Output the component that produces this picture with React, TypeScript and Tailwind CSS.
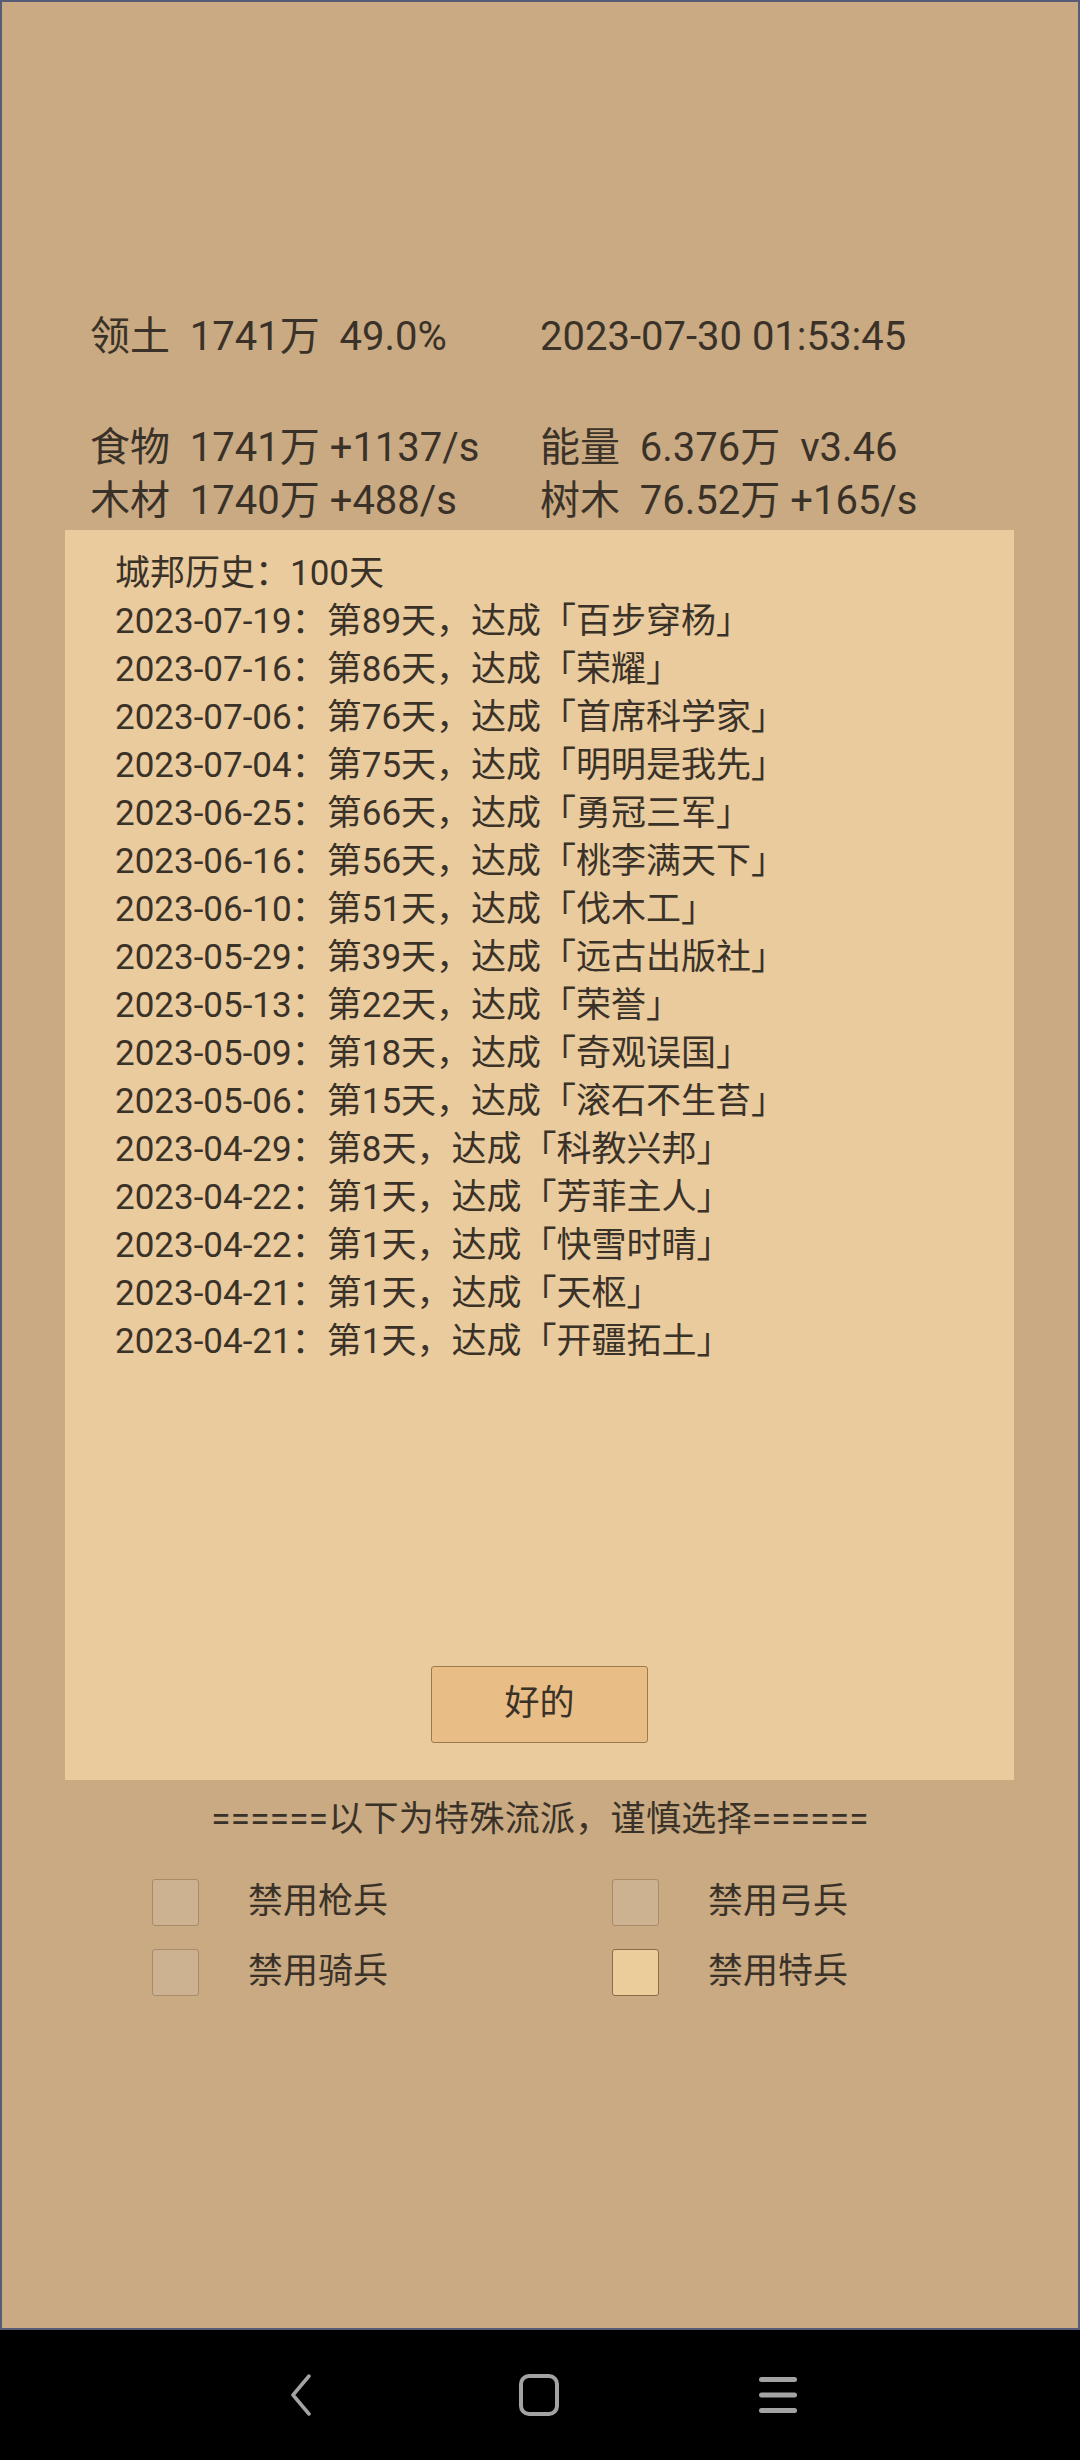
import React from "react";

const FONT = { fontFamily: 'Roboto, "Noto Sans CJK SC", sans-serif' };

const history: [string, string, string][] = [
  ["2023-07-19", "第89天", "百步穿杨"],
  ["2023-07-16", "第86天", "荣耀"],
  ["2023-07-06", "第76天", "首席科学家"],
  ["2023-07-04", "第75天", "明明是我先"],
  ["2023-06-25", "第66天", "勇冠三军"],
  ["2023-06-16", "第56天", "桃李满天下"],
  ["2023-06-10", "第51天", "伐木工"],
  ["2023-05-29", "第39天", "远古出版社"],
  ["2023-05-13", "第22天", "荣誉"],
  ["2023-05-09", "第18天", "奇观误国"],
  ["2023-05-06", "第15天", "滚石不生苔"],
  ["2023-04-29", "第8天", "科教兴邦"],
  ["2023-04-22", "第1天", "芳菲主人"],
  ["2023-04-22", "第1天", "快雪时晴"],
  ["2023-04-21", "第1天", "天枢"],
  ["2023-04-21", "第1天", "开疆拓土"],
];

function Box({ checked }: { checked?: boolean }) {
  return (
    <div
      className={
        checked
          ? "w-[47px] h-[47px] rounded-[3px] border border-[#8d6b45] bg-[#ebcc9b] shrink-0"
          : "w-[47px] h-[47px] rounded-[3px] border border-[#a88b68] bg-[#cdb292] shrink-0"
      }
    />
  );
}

function Check({ label, checked }: { label: string; checked?: boolean }) {
  return (
    <div className="flex items-center h-[70px]">
      <Box checked={checked} />
      <span className="ml-[49px] text-[35px] leading-[48px] text-[#3a3228]">{label}</span>
    </div>
  );
}

export default function App() {
  return (
    <div className="w-[1080px] h-[2460px] flex flex-col" style={FONT}>
      <div className="h-[2330px] border-2 border-[#575b78] bg-[#c9aa82] flex flex-col text-[#3a3228]">
        <div className="pt-[308px] pl-[88px] grid grid-cols-[450px_1fr] text-[40px] leading-[53px] whitespace-pre">
          <div>领土  1741万  49.0%</div>
          <div>2023-07-30 01:53:45</div>
        </div>
        <div className="mt-[58px] pl-[88px] grid grid-cols-[450px_1fr] text-[40px] leading-[53px] whitespace-pre">
          <div>食物  1741万 +1137/s</div>
          <div>能量  6.376万  v3.46</div>
          <div>木材  1740万 +488/s</div>
          <div>树木  76.52万 +165/s</div>
        </div>
        <div className="mt-[3px] ml-[63px] w-[949px] h-[1250px] bg-[#e9cb9e] flex flex-col pl-[50px] pt-[20px] pb-[37px]">
          <div className="text-[35px] leading-[48px]">城邦历史：100天</div>
          {history.map(([d, day, name], i) => (
            <div key={i} className="text-[35px] leading-[48px] whitespace-pre">
              {d}：{day}，达成「{name}」
            </div>
          ))}
          <div className="mt-auto flex justify-center pr-[50px]">
            <button className="w-[217px] h-[77px] rounded-[3px] border border-[#9c7a4f] bg-[#e9be86] text-[35px] text-[#3a3228] flex items-center justify-center">
              好的
            </button>
          </div>
        </div>
        <div className="mt-[16px] text-center text-[35px] leading-[48px] tracking-[0.3px]">
          ======以下为特殊流派，谨慎选择======
        </div>
        <div className="mt-[23px] pl-[150px] grid grid-cols-[460px_1fr]">
          <Check label="禁用枪兵" />
          <Check label="禁用弓兵" />
          <Check label="禁用骑兵" />
          <Check label="禁用特兵" checked />
        </div>
      </div>
      <div className="h-[130px] bg-black flex items-center pl-[288px]">
        <svg width="26" height="42" viewBox="0 0 26 42">
          <path d="M21 2 L5 21 L21 40" fill="none" stroke="#a3a3a3" strokeWidth="3.5" strokeLinecap="round" strokeLinejoin="round" />
        </svg>
        <svg width="42" height="44" viewBox="0 0 42 44" className="ml-[204px]">
          <rect x="3" y="3" width="36" height="38" rx="8" fill="none" stroke="#a3a3a3" strokeWidth="4" />
        </svg>
        <svg width="40" height="40" viewBox="0 0 40 40" className="ml-[198px]">
          <rect x="1" y="2" width="38" height="5" rx="2.5" fill="#a3a3a3" />
          <rect x="1" y="17.5" width="38" height="5" rx="2.5" fill="#a3a3a3" />
          <rect x="1" y="33" width="38" height="5" rx="2.5" fill="#a3a3a3" />
        </svg>
      </div>
    </div>
  );
}
